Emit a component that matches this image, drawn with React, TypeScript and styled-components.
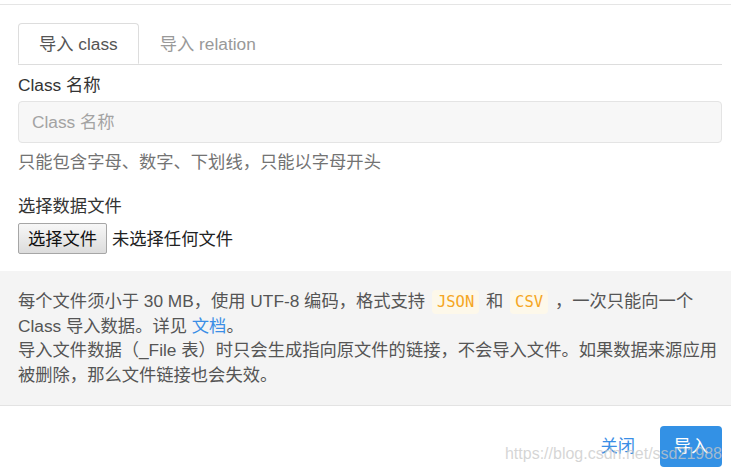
import React from 'react';
import styled, { createGlobalStyle } from 'styled-components';

const GlobalStyle = createGlobalStyle`
  html, body {
    margin: 0;
    padding: 0;
    background: #fff;
  }
  body {
    font-family: 'Liberation Sans', 'Noto Sans CJK SC', sans-serif;
    font-size: 17.3px;
    line-height: 24px;
    color: #333;
  }
`;

const Dialog = styled.div`
  position: relative;
  width: 731px;
  height: 473px;
  overflow: hidden;
  background: #fff;
`;

const Header = styled.div`
  height: 4px;
  border-bottom: 1px solid #e5e5e5;
`;

const Body = styled.div`
  padding: 18px 9px 17px 18px;
`;

const Tabs = styled.div`
  display: flex;
  height: 41px;
  border-bottom: 1px solid #ddd;
`;

const Tab = styled.div<{ $active?: boolean }>`
  display: flex;
  align-items: center;
  padding: 0 20px;
  margin-bottom: -1px;
  height: 41px;
  box-sizing: border-box;
  color: ${(p) => (p.$active ? '#555' : '#999')};
  background: #fff;
  border: 1px solid ${(p) => (p.$active ? '#ddd' : 'transparent')};
  border-bottom-color: ${(p) => (p.$active ? '#fff' : 'transparent')};
  border-radius: 4px 4px 0 0;
`;

const Label = styled.div<{ $top: number }>`
  margin-top: ${(p) => p.$top}px;
  color: #333;
`;

const TextInput = styled.input`
  display: block;
  width: 100%;
  box-sizing: border-box;
  height: 42px;
  margin-top: 4px;
  padding: 0 13px;
  font: inherit;
  color: #333;
  background: #f7f7f7;
  border: 1px solid #e4e4e4;
  border-radius: 4px;
  outline: none;

  &::placeholder {
    color: #a3a3a3;
  }
`;

const Help = styled.div`
  margin-top: 7px;
  color: #737373;
`;

const FileRow = styled.div`
  display: flex;
  align-items: center;
  gap: 5px;
  margin-top: 5px;
  color: #222;
`;

const FileButton = styled.button`
  height: 31px;
  width: 89px;
  padding: 0;
  font: inherit;
  color: #111;
  background: linear-gradient(#f7f7f7, #dcdcdc);
  border: 1px solid #a6a6a6;
  border-radius: 2px;
`;

const Notice = styled.div`
  padding: 18px 10px 18px 18px;
  background: #f4f4f4;
  border-bottom: 1px solid #e3e3e3;
  color: #555;
  line-height: 24.3px;
`;

const Code = styled.code`
  display: inline-block;
  padding: 0 5px;
  margin: 0 2px;
  font-family: 'DejaVu Sans Mono', 'Liberation Mono', monospace;
  font-size: 15.5px;
  line-height: 24px;
  color: #f5a623;
  background: #fdf8ea;
  border-radius: 4px;
`;

const DocLink = styled.a`
  color: #3a8ee6;
  text-decoration: none;
`;

const Footer = styled.div`
  display: flex;
  justify-content: flex-end;
  align-items: center;
  gap: 25px;
  padding: 20px 9px 0 18px;
`;

const LinkButton = styled.button`
  padding: 0;
  font: inherit;
  color: #3a8ee6;
  background: none;
  border: none;
`;

const PrimaryButton = styled.button`
  width: 62px;
  height: 41px;
  padding: 0;
  font: inherit;
  color: #fff;
  background: #3391e5;
  border: none;
  border-radius: 4px;
`;

const Watermark = styled.div`
  position: absolute;
  right: 9px;
  top: 442px;
  font-family: 'Liberation Sans', sans-serif;
  font-size: 16px;
  line-height: 24px;
  color: rgba(200, 200, 200, 0.75);
  pointer-events: none;
`;

export default function App() {
  return (
    <>
      <GlobalStyle />
      <Dialog>
        <Header />
        <Body>
          <Tabs>
            <Tab $active>导入 class</Tab>
            <Tab>导入 relation</Tab>
          </Tabs>
          <Label $top={8}>Class 名称</Label>
          <TextInput placeholder="Class 名称" />
          <Help>只能包含字母、数字、下划线，只能以字母开头</Help>
          <Label $top={20}>选择数据文件</Label>
          <FileRow>
            <FileButton>选择文件</FileButton>
            <span>未选择任何文件</span>
          </FileRow>
        </Body>
        <Notice>
          每个文件须小于 30 MB，使用 UTF-8 编码，格式支持 <Code>JSON</Code> 和 <Code>CSV</Code> ，一次只能向一个
          <br />
          Class 导入数据。详见 <DocLink href="#">文档</DocLink>。
          <br />
          导入文件数据（_File 表）时只会生成指向原文件的链接，不会导入文件。如果数据来源应用
          <br />
          被删除，那么文件链接也会失效。
        </Notice>
        <Footer>
          <LinkButton>关闭</LinkButton>
          <PrimaryButton>导入</PrimaryButton>
        </Footer>
        <Watermark>https://blog.csdn.net/ssd21988</Watermark>
      </Dialog>
    </>
  );
}
